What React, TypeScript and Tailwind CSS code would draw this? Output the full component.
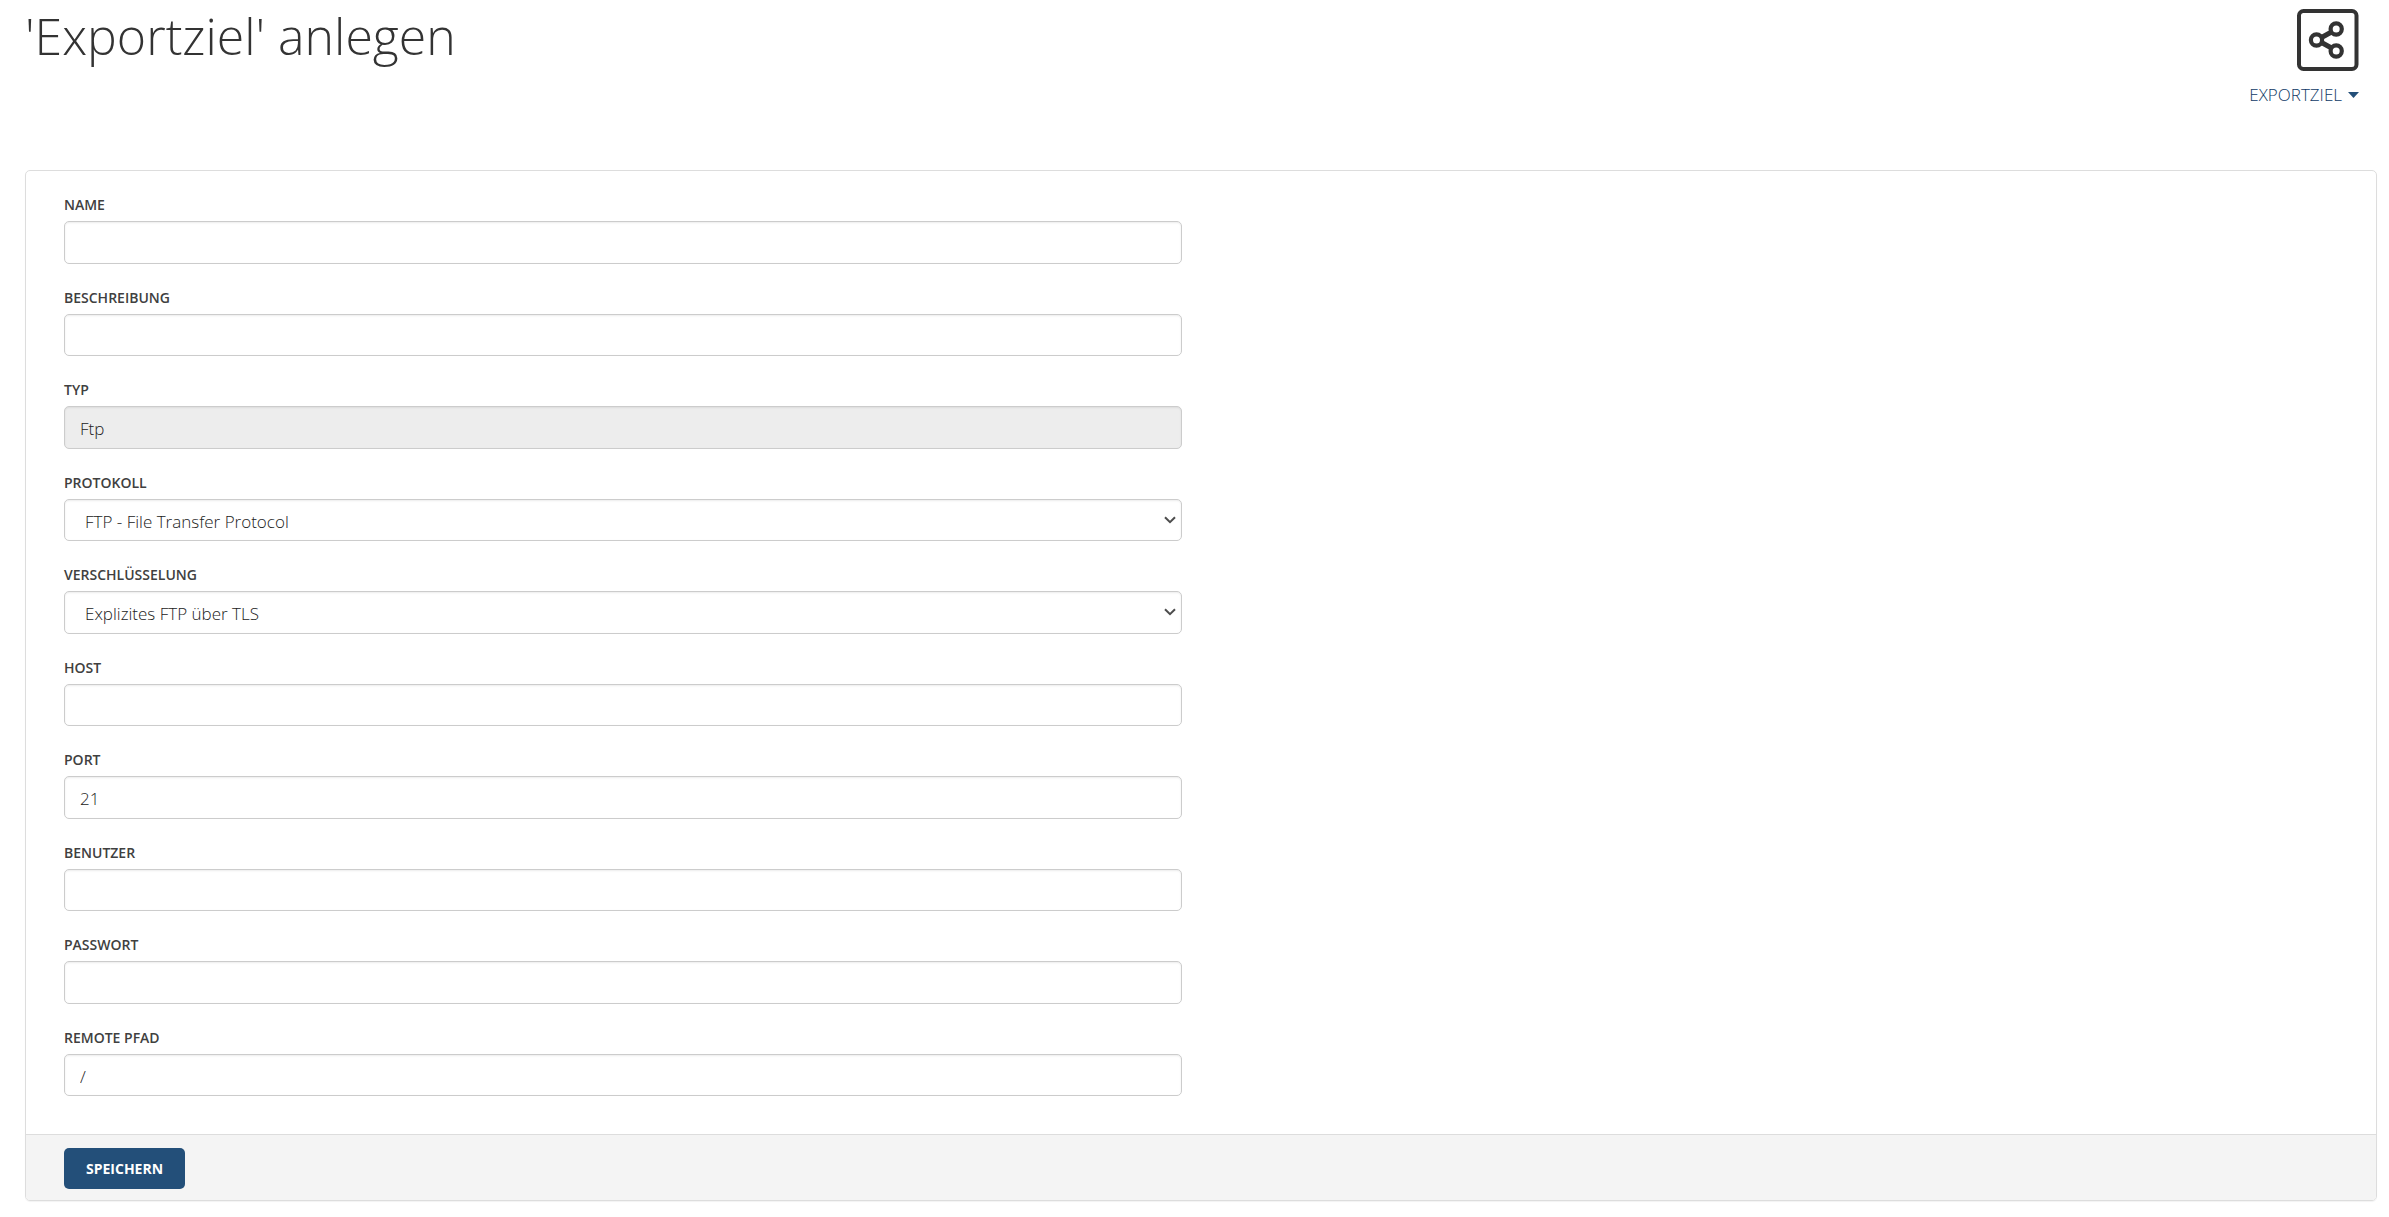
import React, { useState } from "react";

type Option = {
  value: string;
  label: string;
};

type Field = {
  id: string;
  label: string;
  type?: "text" | "password";
  disabled?: boolean;
  options?: Option[];
};

const fields: Field[] = [
  { id: "name", label: "Name" },
  { id: "description", label: "Beschreibung" },
  { id: "type", label: "Typ", disabled: true },
  {
    id: "protocol",
    label: "Protokoll",
    options: [
      { value: "ftp", label: "FTP - File Transfer Protocol" },
      { value: "sftp", label: "SFTP - SSH File Transfer Protocol" },
    ],
  },
  {
    id: "encryption",
    label: "Verschlüsselung",
    options: [
      { value: "explicit", label: "Explizites FTP über TLS" },
      { value: "implicit", label: "Implizites FTP über TLS" },
      { value: "none", label: "Keine" },
    ],
  },
  { id: "host", label: "Host" },
  { id: "port", label: "Port" },
  { id: "user", label: "Benutzer" },
  { id: "password", label: "Passwort", type: "password" },
  { id: "path", label: "Remote Pfad" },
];

const initialValues: Record<string, string> = {
  name: "",
  description: "",
  type: "Ftp",
  protocol: "ftp",
  encryption: "explicit",
  host: "",
  port: "21",
  user: "",
  password: "",
  path: "/",
};

const controlClass =
  "block w-full rounded-[5px] border border-[#cccccc] bg-white pt-[9px] pr-[15px] pb-1.5 text-[17px] leading-normal font-light text-[#222222] shadow-[inset_0_1px_2px_rgba(0,0,0,0.08)] disabled:bg-[#ededed] disabled:opacity-100";

function ShareIcon() {
  return (
    <svg className="size-[62px]" viewBox="0 0 62 62" fill="none" stroke="#333333" aria-hidden="true">
      <rect x="2" y="2" width="57.5" height="58" rx="4.5" strokeWidth="4" />
      <path d="M20 31 39 20.5M20 31l19 10.5" strokeWidth="5" />
      <g fill="#fff" strokeWidth="4.2">
        <circle cx="19.5" cy="31" r="5.6" />
        <circle cx="39.2" cy="20" r="5.6" />
        <circle cx="39.2" cy="42" r="5.6" />
      </g>
    </svg>
  );
}

export default function App() {
  const [values, setValues] = useState(initialValues);

  function update(id: string, value: string) {
    setValues({ ...values, [id]: value });
  }

  return (
    <div className="bg-white pt-[9px] pr-3 pb-4 pl-[25px] font-['Open_Sans','Noto_Sans',sans-serif] text-[#333333]">
      <header className="flex h-[161px] items-start justify-between pr-[18px]">
        <h1 className="text-[50px] leading-[54px] font-light">'Exportziel' anlegen</h1>
        <div className="flex flex-col items-end gap-3">
          <ShareIcon />
          <button type="button" className="flex items-center gap-1.5 text-[17px] leading-6 font-light text-[#0f3a66] uppercase">
            Exportziel
            <svg className="h-[6px] w-[11px] text-[#234f79]" viewBox="0 0 11 6" fill="currentColor" aria-hidden="true">
              <path d="M0 0h11L5.5 6z" />
            </svg>
          </button>
        </div>
      </header>

      <form
        className="overflow-hidden rounded-[5px] border border-[#dddddd] shadow-[0_1px_1px_rgba(0,0,0,0.05)]"
        onSubmit={(e) => e.preventDefault()}
      >
        <div className="grid grid-cols-2 gap-[38px] px-[38px] pt-6 pb-[38px]">
          <div className="flex flex-col gap-6">
            {fields.map((field) => (
              <div key={field.id}>
                <label htmlFor={field.id} className="mb-1.5 block text-sm leading-5 font-semibold text-[#404040] uppercase">
                  {field.label}
                </label>
                {field.options ? (
                  <div className="relative">
                    <select
                      id={field.id}
                      className={`${controlClass} appearance-none pl-5`}
                      value={values[field.id]}
                      onChange={(e) => update(field.id, e.target.value)}
                    >
                      {field.options.map((option) => (
                        <option key={option.value} value={option.value}>
                          {option.label}
                        </option>
                      ))}
                    </select>
                    <svg
                      className="pointer-events-none absolute inset-y-0 right-1.5 my-auto h-2 w-3"
                      viewBox="0 0 12 8"
                      fill="none"
                      stroke="#4d4d4d"
                      strokeWidth="2"
                      aria-hidden="true"
                    >
                      <path d="M1 1.2 6 6.2 11 1.2" />
                    </svg>
                  </div>
                ) : (
                  <input
                    id={field.id}
                    type={field.type ?? "text"}
                    className={`${controlClass} pl-[15px]`}
                    value={values[field.id]}
                    disabled={field.disabled}
                    onChange={(e) => update(field.id, e.target.value)}
                  />
                )}
              </div>
            ))}
          </div>
        </div>

        <footer className="border-t border-[#dddddd] bg-[#f4f4f4] px-[38px] pt-[13px] pb-[11px]">
          <button
            type="submit"
            className="h-[41px] rounded-[5px] bg-[#234f79] px-[22px] text-sm font-bold text-white uppercase"
          >
            Speichern
          </button>
        </footer>
      </form>
    </div>
  );
}
